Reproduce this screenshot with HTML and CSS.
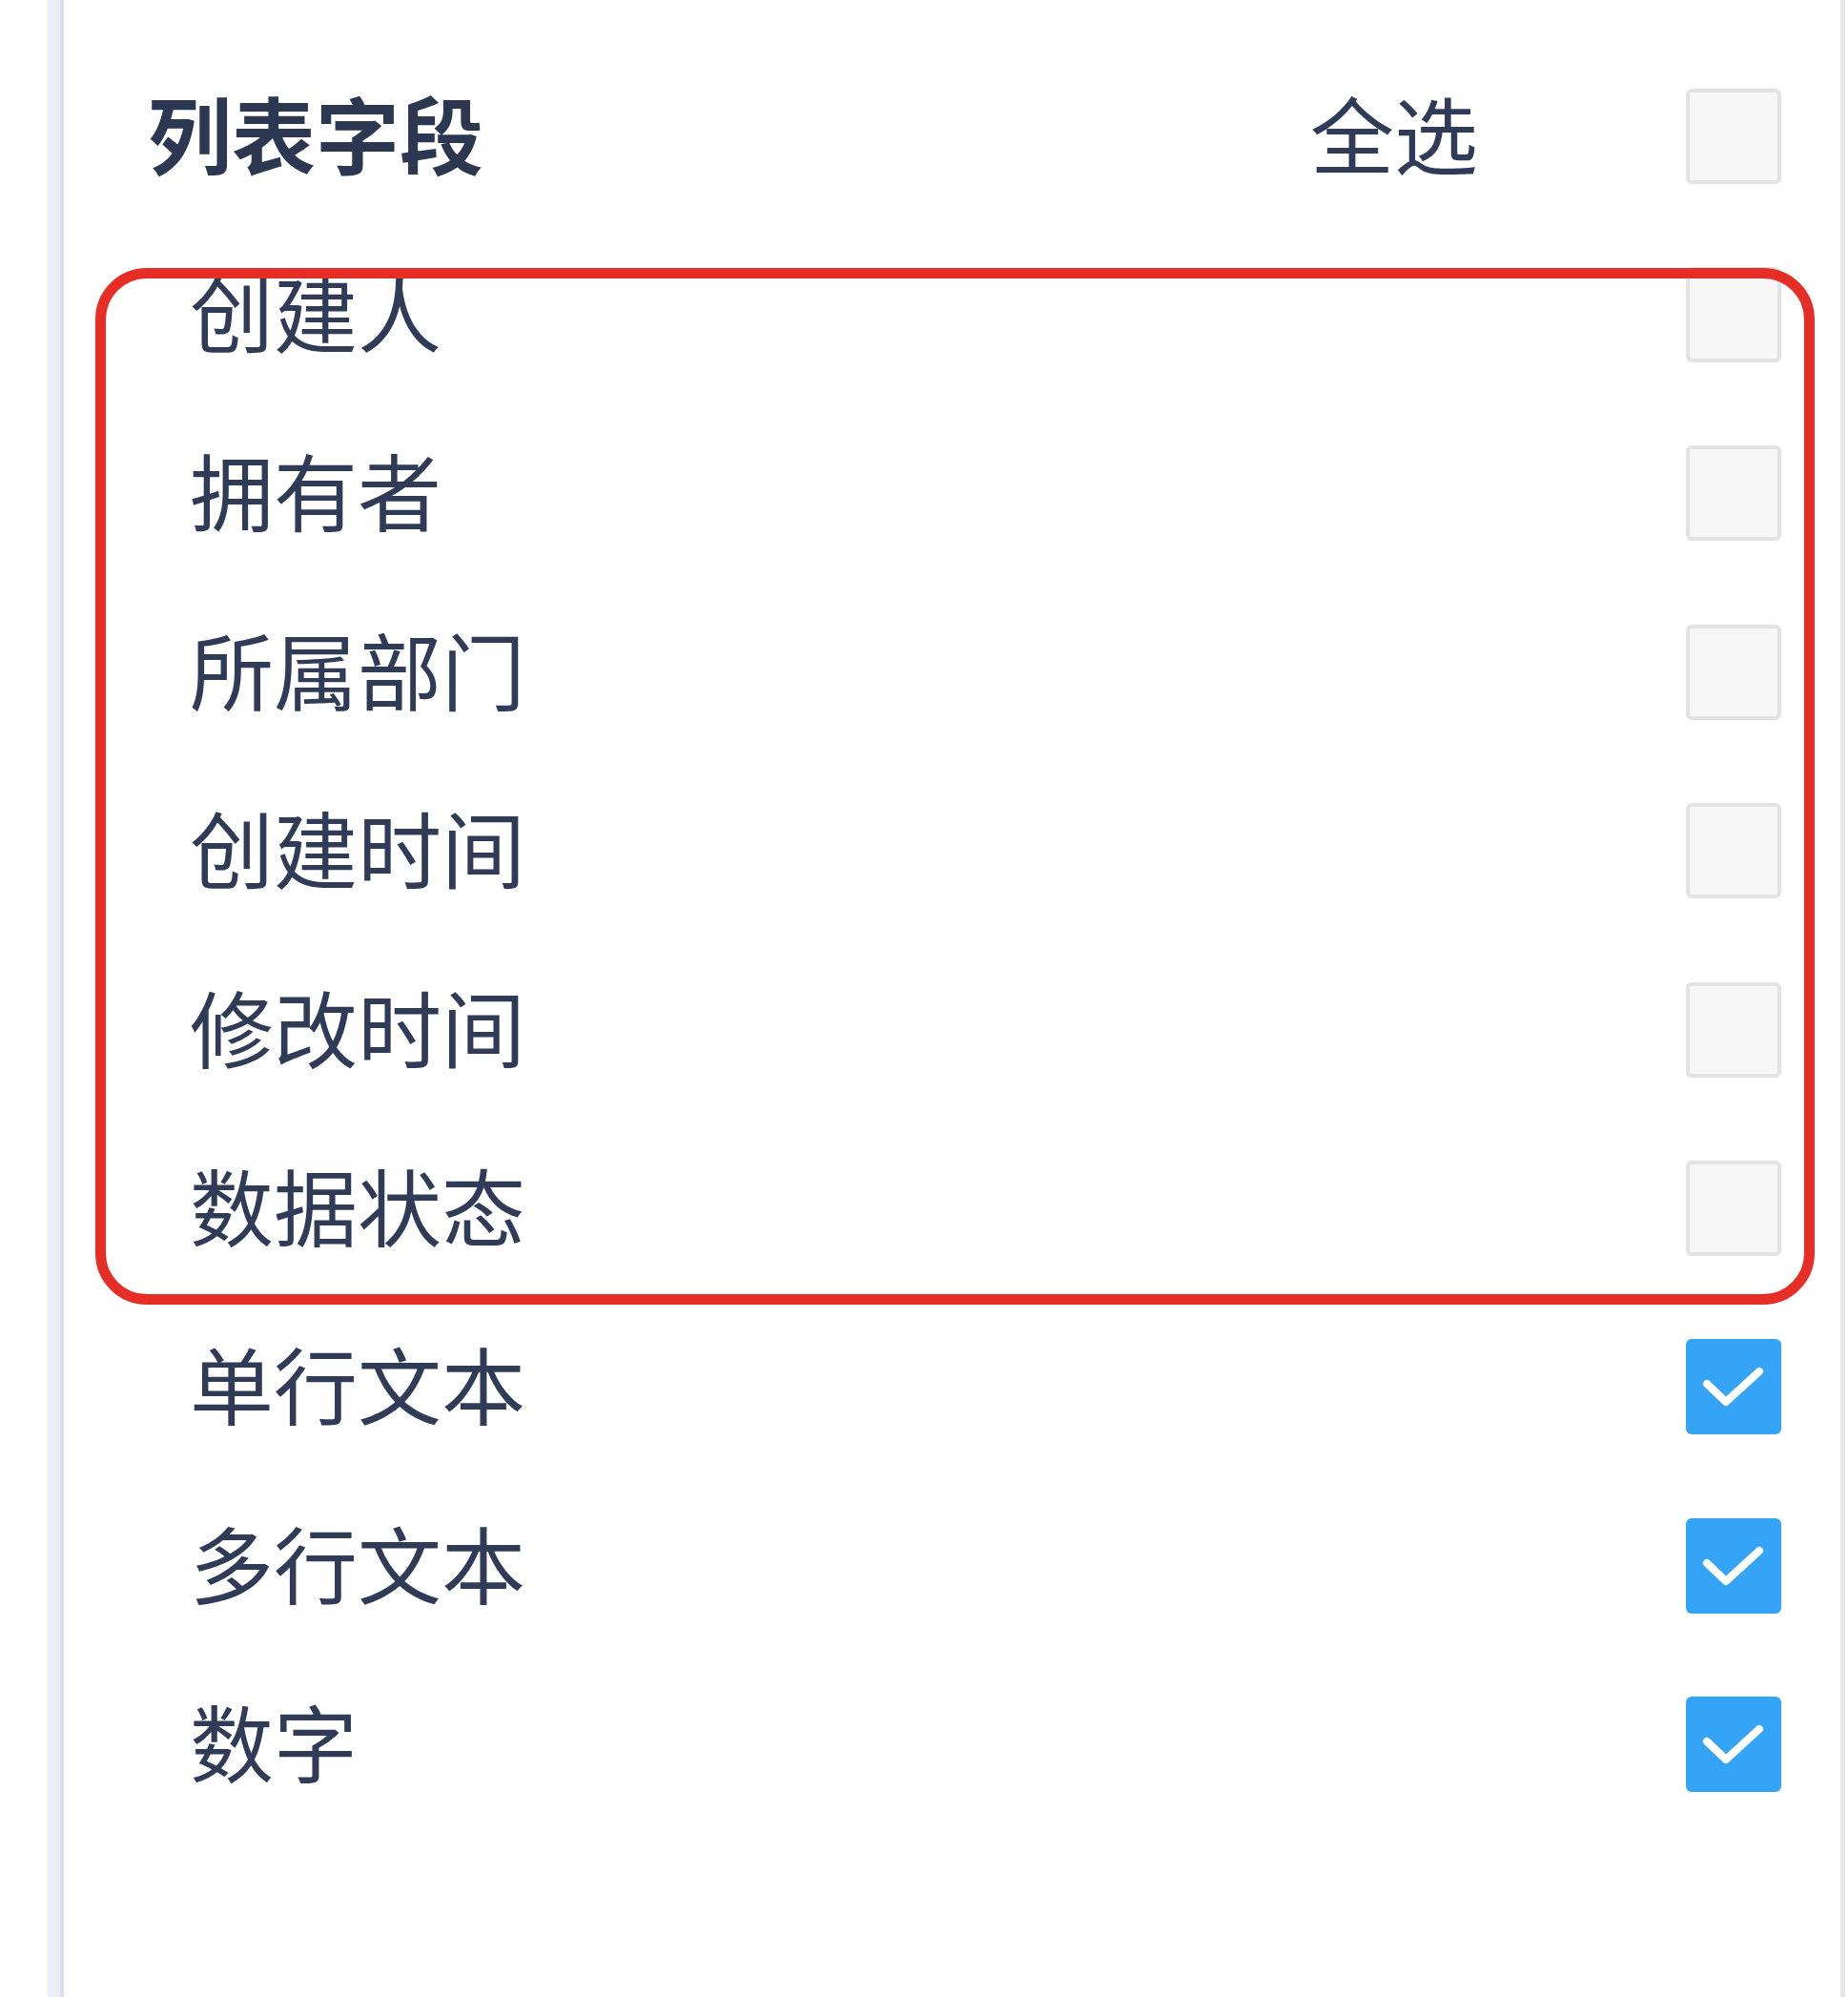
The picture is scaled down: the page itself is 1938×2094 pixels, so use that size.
FILE: index.html
```html
<!DOCTYPE html>
<html lang="zh-CN">
<head>
    <meta charset="UTF-8">
    <meta name="viewport" content="width=device-width, initial-scale=1.0">
    <title>列表字段</title>
    <link rel="stylesheet" href="styles.css">
</head>
<body>

    <div class="page">
        <div class="rail"></div>

        <div class="panel">
            <div class="row head">
                <div class="title">列表字段</div>
                <div class="select-all">全选</div>
                <span class="box"></span>
            </div>

            <!-- system fields, marked with the red frame -->
            <div class="group">
                <div class="row"><div class="label">创建人</div><span class="box"></span></div>
                <div class="row"><div class="label">拥有者</div><span class="box"></span></div>
                <div class="row"><div class="label">所属部门</div><span class="box"></span></div>
                <div class="row"><div class="label">创建时间</div><span class="box"></span></div>
                <div class="row"><div class="label">修改时间</div><span class="box"></span></div>
                <div class="row"><div class="label">数据状态</div><span class="box"></span></div>
                <div class="mark"></div>
            </div>

            <div class="row">
                <div class="label">单行文本</div>
                <span class="box checked">
                    <svg viewBox="0 0 100 100"><polyline points="22,47 42,66 77,34"/></svg>
                </span>
            </div>
            <div class="row">
                <div class="label">多行文本</div>
                <span class="box checked">
                    <svg viewBox="0 0 100 100"><polyline points="22,47 42,66 77,34"/></svg>
                </span>
            </div>
            <div class="row">
                <div class="label">数字</div>
                <span class="box checked">
                    <svg viewBox="0 0 100 100"><polyline points="22,47 42,66 77,34"/></svg>
                </span>
            </div>
        </div>
    </div>

</body>
</html>
```

FILE: styles.css
```css
body {
    margin: 0;
    background: #ffffff;
    font-family: "Noto Sans CJK SC", "Noto Sans", sans-serif;
    color: #303c57;
}

.page {
    display: flex;
    min-height: 100vh;
    padding-left: 50px;
    padding-right: 3px;
    box-sizing: border-box;
}

.rail {
    width: 13px;
    background: #ededf8;
    border-right: 4px solid #dfdfea;
}

.panel {
    flex: 1;
    padding-top: 49px;
    border-right: 5px solid #e8e8ec;
}

.row {
    display: flex;
    align-items: center;
    height: 187.4px;
    padding-left: 132px;
    padding-right: 62px;
    font-size: 88px;
    line-height: 1;
}

.row.head {
    padding-left: 88px;
}

/* lift the glyphs a little so they sit on the checkbox centre line */
.title,
.select-all,
.label {
    padding-bottom: 10px;
}

.title {
    flex: 1;
    font-weight: 700;
    color: #2c3852;
}

.select-all {
    margin-right: 218px;
}

.label {
    flex: 1;
}

.box {
    width: 100px;
    height: 100px;
    box-sizing: border-box;
    border: 4px solid #e3e3e5;
    border-radius: 6px;
    background: #f7f7f8;
    flex-shrink: 0;
}

.box.checked {
    border: none;
    background: #35a3f6;
}

.box svg {
    display: block;
    width: 100%;
    height: 100%;
}

.box polyline {
    fill: none;
    stroke: #ffffff;
    stroke-width: 8;
    stroke-linecap: round;
    stroke-linejoin: round;
}

.group {
    position: relative;
}

/* annotation frame drawn over the rows */
.mark {
    position: absolute;
    top: 45px;
    left: 33px;
    right: 27px;
    bottom: -7px;
    border: 11px solid #e62d26;
    border-radius: 54px;
    pointer-events: none;
}
```
